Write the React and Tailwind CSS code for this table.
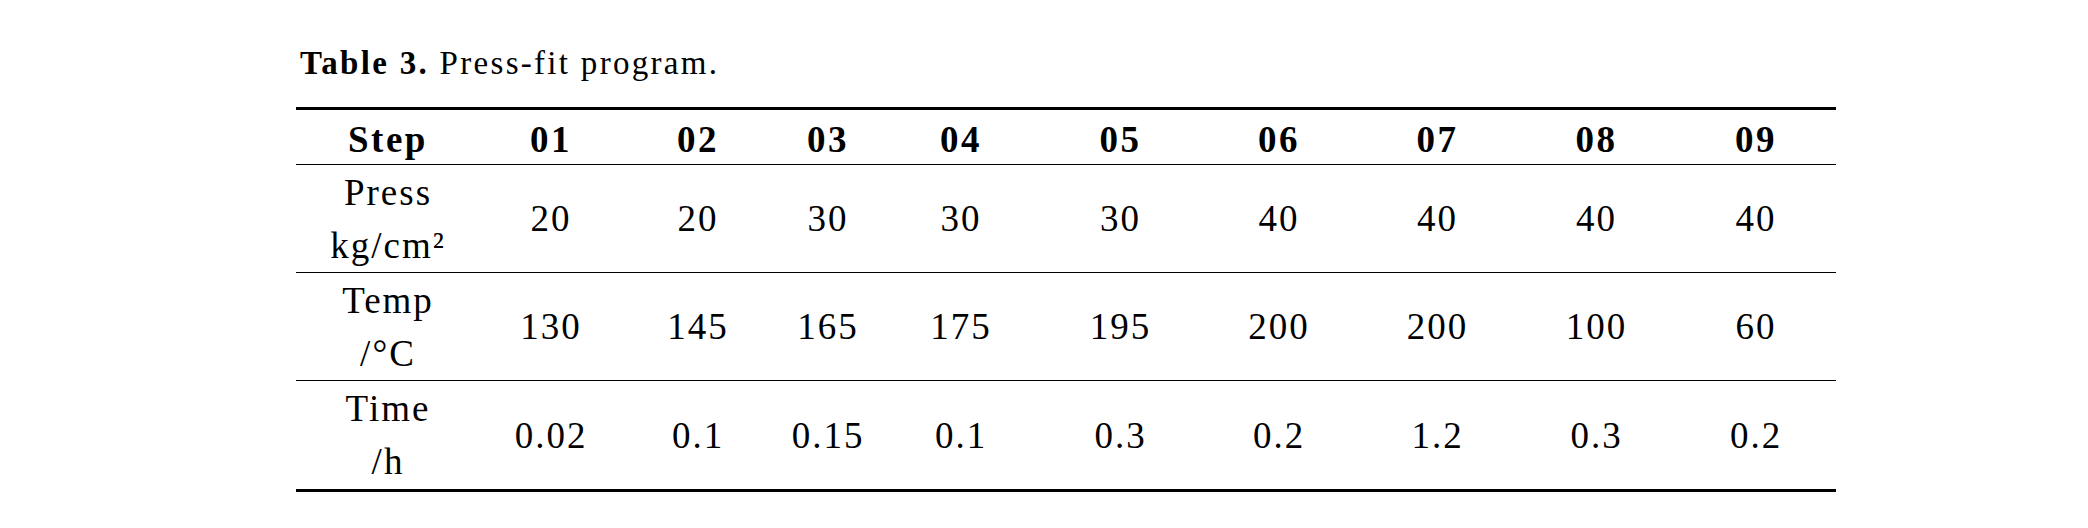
import React from "react";

const cols = "grid grid-cols-[174px_155px_137px_132px_147px_159px_158px_159px_159px_160px]";

// nudges so each value sits where the reference puts it
const shift = ["pl-[10px]", "pl-[7px]", "pl-[9px]", "", "pr-[13px]", "", "", "", "", ""];

const steps = ["01", "02", "03", "04", "05", "06", "07", "08", "09"];

const rows = [
  { label: ["Press", "kg/cm²"], values: ["20", "20", "30", "30", "30", "40", "40", "40", "40"] },
  { label: ["Temp", "/°C"], values: ["130", "145", "165", "175", "195", "200", "200", "100", "60"] },
  { label: ["Time", "/h"], values: ["0.02", "0.1", "0.15", "0.1", "0.3", "0.2", "1.2", "0.3", "0.2"] },
];

export default function App() {
  return (
    <div className="w-[2088px] h-[528px] bg-white text-black pl-[296px] pt-[44px] font-['Liberation_Serif',serif]">
      <p className="pl-[4px] text-[33px] leading-[38px] tracking-[2.3px]">
        <span className="font-bold">Table 3.</span> Press-fit program.
      </p>

      <div className="mt-[25px] w-[1540px] border-t-[3px] border-b-[3.5px] border-black text-[37px]">
        <div className={`${cols} border-b-[1.5px] border-black font-bold tracking-[2.5px] h-[55px] pt-[6px] leading-[48px]`}>
          <div className={`text-center ${shift[0]}`}>Step</div>
          {steps.map((s, j) => (
            <div key={s} className={`text-center ${shift[j + 1]}`}>{s}</div>
          ))}
        </div>

        {rows.map((r, i) => (
          <div
            key={r.label[0]}
            className={`${cols} h-[108px] leading-[53px] tracking-[2px] ${i < rows.length - 1 ? "border-b-[1.5px] border-black" : ""}`}
          >
            <div className={`flex flex-col items-center justify-center ${shift[0]}`}>
              <span>{r.label[0]}</span>
              <span>{r.label[1]}</span>
            </div>
            {r.values.map((v, j) => (
              <div key={j} className={`flex items-center justify-center ${shift[j + 1]}`}>{v}</div>
            ))}
          </div>
        ))}
      </div>
    </div>
  );
}
